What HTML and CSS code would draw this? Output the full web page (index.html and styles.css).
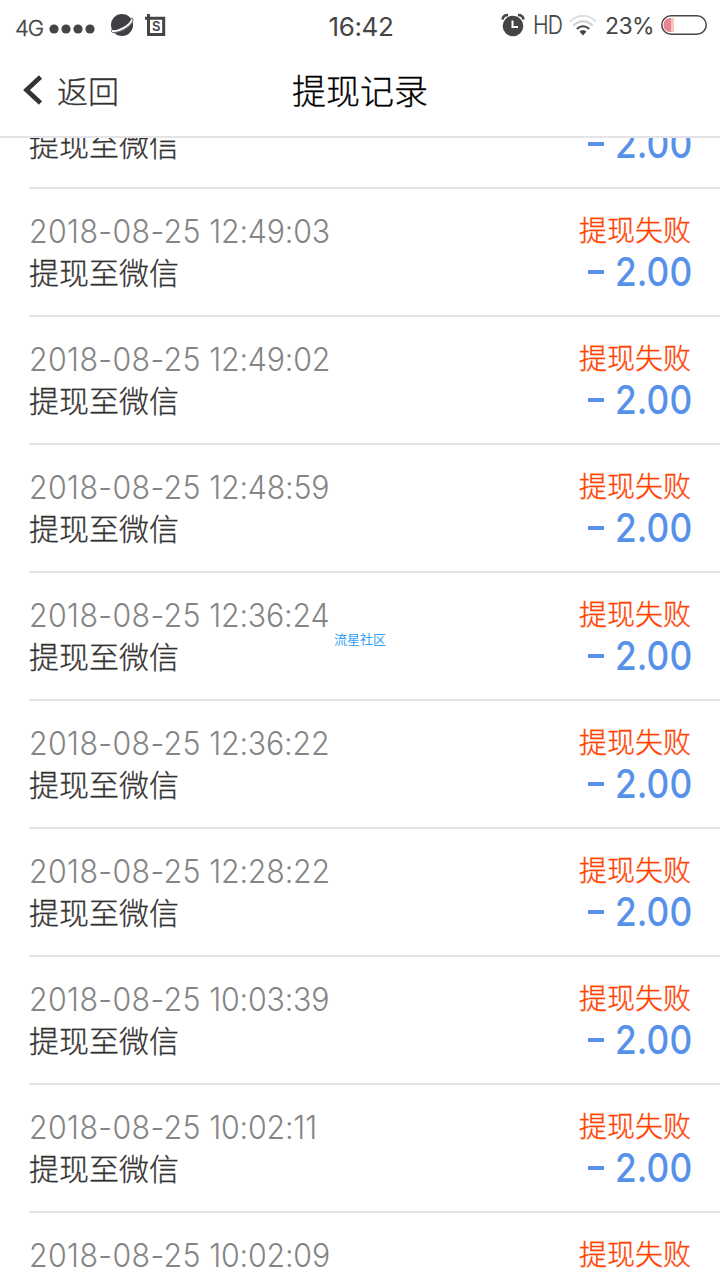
FILE: index.html
```html
<!DOCTYPE html>
<html lang="zh-CN">
<head>
<meta charset="utf-8">
<title>提现记录</title>
<link rel="stylesheet" href="styles.css">
</head>
<body>
<div class="screen">
  <header class="status">
    <div class="status-left">
      <span class="network">4G</span>
      <svg class="signal" width="46" height="10" viewBox="0 0 46 10"><circle cx="5" cy="5" r="4.6"/><circle cx="17" cy="5" r="4.6"/><circle cx="29" cy="5" r="4.6"/><circle cx="41" cy="5" r="4.6"/></svg>
      <svg class="planet" width="24" height="24" viewBox="0 0 24 24"><circle cx="12" cy="12" r="11"/><path class="planet-gap" d="M1.500 18.500C8 19.500 19 14 22.300 7"/><path class="planet-ring" d="M1.800 16.500C.8 19 2 20 5 19.500C12 18.500 21.500 12.500 22.900 7.500C23.300 5.800 22.500 5.300 21 5.300"/></svg>
      <svg class="s-box" width="21" height="23" viewBox="0 0 21 23"><path d="M3.500 0V20.500H18.700V4.200H0"/><text x="11.200" y="16.500">S</text></svg>
    </div>
    <div class="clock">16:42</div>
    <div class="status-right">
      <svg class="alarm" width="24" height="24" viewBox="0 0 24 24"><circle cx="12" cy="13" r="10.300"/><path class="bell" d="M1.500 6.500Q2 2 7 2M22.500 6.500Q22 2 17 2"/><path class="hands" d="M11.500 7.500V14H17"/></svg>
      <span class="hd">HD</span>
      <svg class="wifi" width="28" height="21" viewBox="0 0 28 21"><path class="far" d="M.8 6.500Q14-5 27.200 6.500"/><path class="mid" d="M4.300 10.500Q14 2 23.700 10.500"/><path class="near" d="M7.800 14Q14 8.500 20.200 14"/><path class="dot" d="M10.500 16.500Q14 13.500 17.500 16.500L14 20.500Z"/></svg>
      <span class="percent">23%</span>
      <svg class="battery" width="46" height="20" viewBox="0 0 46 20"><path class="charge" d="M10.500 3H9A6.500 7 0 0 0 9 17H10.500Z"/><path class="charge-edge" d="M10.500 3H13V17H10.500Z"/><rect x=".8" y=".8" width="44.400" height="18.400" rx="9.200"/></svg>
    </div>
  </header>
  <nav class="navbar">
    <div class="back"><svg width="20" height="32" viewBox="0 0 20 32"><path d="M17.500 3L3.500 16L17.500 29"/></svg><span>返回</span></div>
    <h1 class="title">提现记录</h1>
  </nav>
  <main class="list">
    <div class="row scrolled"><div class="info"><div class="target">提现至微信</div></div><div class="result"><div class="amount"><i class="minus"></i><span>2.00</span></div></div></div>
    <div class="row"><div class="info"><div class="date">2018-08-25 <span class="time">12:49:03</span></div><div class="target">提现至微信</div></div><div class="result"><div class="state">提现失败</div><div class="amount"><i class="minus"></i><span>2.00</span></div></div></div>
    <div class="row"><div class="info"><div class="date">2018-08-25 <span class="time">12:49:02</span></div><div class="target">提现至微信</div></div><div class="result"><div class="state">提现失败</div><div class="amount"><i class="minus"></i><span>2.00</span></div></div></div>
    <div class="row"><div class="info"><div class="date">2018-08-25 <span class="time">12:48:59</span></div><div class="target">提现至微信</div></div><div class="result"><div class="state">提现失败</div><div class="amount"><i class="minus"></i><span>2.00</span></div></div></div>
    <div class="row"><div class="info"><div class="date">2018-08-25 <span class="time">12:36:24</span></div><div class="target">提现至微信</div></div><div class="result"><div class="state">提现失败</div><div class="amount"><i class="minus"></i><span>2.00</span></div></div></div>
    <div class="row"><div class="info"><div class="date">2018-08-25 <span class="time">12:36:22</span></div><div class="target">提现至微信</div></div><div class="result"><div class="state">提现失败</div><div class="amount"><i class="minus"></i><span>2.00</span></div></div></div>
    <div class="row"><div class="info"><div class="date">2018-08-25 <span class="time">12:28:22</span></div><div class="target">提现至微信</div></div><div class="result"><div class="state">提现失败</div><div class="amount"><i class="minus"></i><span>2.00</span></div></div></div>
    <div class="row"><div class="info"><div class="date">2018-08-25 <span class="time">10:03:39</span></div><div class="target">提现至微信</div></div><div class="result"><div class="state">提现失败</div><div class="amount"><i class="minus"></i><span>2.00</span></div></div></div>
    <div class="row"><div class="info"><div class="date">2018-08-25 <span class="time">10:02:11</span></div><div class="target">提现至微信</div></div><div class="result"><div class="state">提现失败</div><div class="amount"><i class="minus"></i><span>2.00</span></div></div></div>
    <div class="row"><div class="info"><div class="date">2018-08-25 <span class="time">10:02:09</span></div></div><div class="result"><div class="state">提现失败</div></div></div>
  </main>
  <div class="watermark">流星社区</div>
</div>
</body>
</html>
```
FILE: styles.css
```css
* { box-sizing: border-box; }
body { margin: 0; background: #fff; }
.screen {
  position: relative;
  display: flex;
  flex-direction: column;
  width: 720px;
  height: 1280px;
  overflow: hidden;
  font-family: Inter, "Noto Sans CJK SC", sans-serif;
  color: #333;
}
svg { display: block; flex: none; fill: none; }
.status {
  display: grid;
  grid-template-columns: 1fr auto 1fr;
  align-items: center;
  height: 48px;
  padding: 0 13px 3px 15px;
  color: #454545;
}
.status-left, .status-right { display: flex; align-items: center; }
.status-right { justify-content: flex-end; }
.network { font: 300 22px/28px Inter, sans-serif; letter-spacing: -1.2px; margin-top: 5px; -webkit-text-stroke: .3px #454545; }
.signal { fill: #454545; margin: 7px 0 0 6px; }
.planet { fill: #403f46; margin: 0 0 0 15px; }
.planet-gap { fill: none; stroke: #fff; stroke-width: 2.6; }
.planet-ring { fill: none; stroke: #403f46; stroke-width: .8; }
.s-box { margin-left: 11px; margin-top: 1px; stroke: #454545; stroke-width: 3; }
.s-box text { font: 600 13px Inter, sans-serif; fill: #454545; stroke: none; text-anchor: middle; }
.clock { font-size: 26px; line-height: 46px; padding-top: 4px; letter-spacing: -.4px; }
.alarm { fill: #454545; }
.bell { fill: none; stroke: #454545; stroke-width: 2.6; }
.hands { fill: none; stroke: #fff; stroke-width: 2; }
.hd { display: inline-block; width: 28px; font: 300 26px/30px Inter, sans-serif; letter-spacing: -1px; margin-left: 8px; transform: scaleX(.81); transform-origin: left; -webkit-text-stroke: .2px #454545; }
.wifi { margin-left: 8px; stroke-width: 2; }
.far { stroke: #ddd; }
.mid { stroke: #ccc; }
.near { stroke: #454545; }
.dot { fill: #454545; }
.percent { font-size: 23px; line-height: 30px; margin: 2px 0 0 8px; letter-spacing: -.6px; }
.battery { margin-left: 7px; }
.battery rect { stroke: #454545; stroke-width: 1.5; }
.charge { fill: #e88492; }
.charge-edge { fill: #f7c7b4; }
.navbar {
  display: grid;
  grid-template-columns: 1fr auto 1fr;
  align-items: center;
  height: 90px;
  padding: 0 23px 4px;
  border-bottom: 2px solid #e4e4e8;
}
.back { display: flex; align-items: center; gap: 14px; font: 300 31px/44px "Noto Sans CJK SC", sans-serif; -webkit-text-stroke: .3px #333; }
.back path { stroke: #333; stroke-width: 4.6; }
.title { margin: 0; font: 300 34px/48px "Noto Sans CJK SC", sans-serif; color: #000; -webkit-text-stroke: .3px #000; }
.list { flex: 1; min-height: 0; overflow: hidden; }
.row {
  display: flex;
  justify-content: space-between;
  height: 128px;
  margin-left: 29px;
  padding: 19px 28px 0 0;
  border-bottom: 2px solid #e2e2e2;
}
.scrolled { height: 51px; padding-top: 0; }
.scrolled .info, .scrolled .result { margin-top: -16px; }
.date { height: 42px; padding-top: 3px; font-size: 32px; font-weight: 300; line-height: 42px; letter-spacing: .4px; word-spacing: -.6px; color: #858585; white-space: nowrap; transform: scaleX(.947); transform-origin: left; }
.time { letter-spacing: -.15px; }
.target { font: 300 30px/42px "Noto Sans CJK SC", sans-serif; -webkit-text-stroke: .3px #333; }
.result { display: flex; flex-direction: column; align-items: flex-end; }
.state { margin-right: 1px; font: 300 28px/42px "Noto Sans CJK SC", sans-serif; color: #ff4200; -webkit-text-stroke: .3px #ff4200; }
.amount { display: flex; align-items: center; gap: 3px; padding-top: 1px; font-size: 39px; font-weight: 500; line-height: 42px; color: #5891e9; }
.amount span { transform: scaleX(.905); transform-origin: right; }
.minus { width: 16px; height: 4px; background: #5891e9; }
.watermark {
  position: absolute;
  left: 334px;
  top: 630px;
  font: 400 13px/18px "Noto Sans CJK SC", sans-serif;
  color: #32a0f5;
}
```
